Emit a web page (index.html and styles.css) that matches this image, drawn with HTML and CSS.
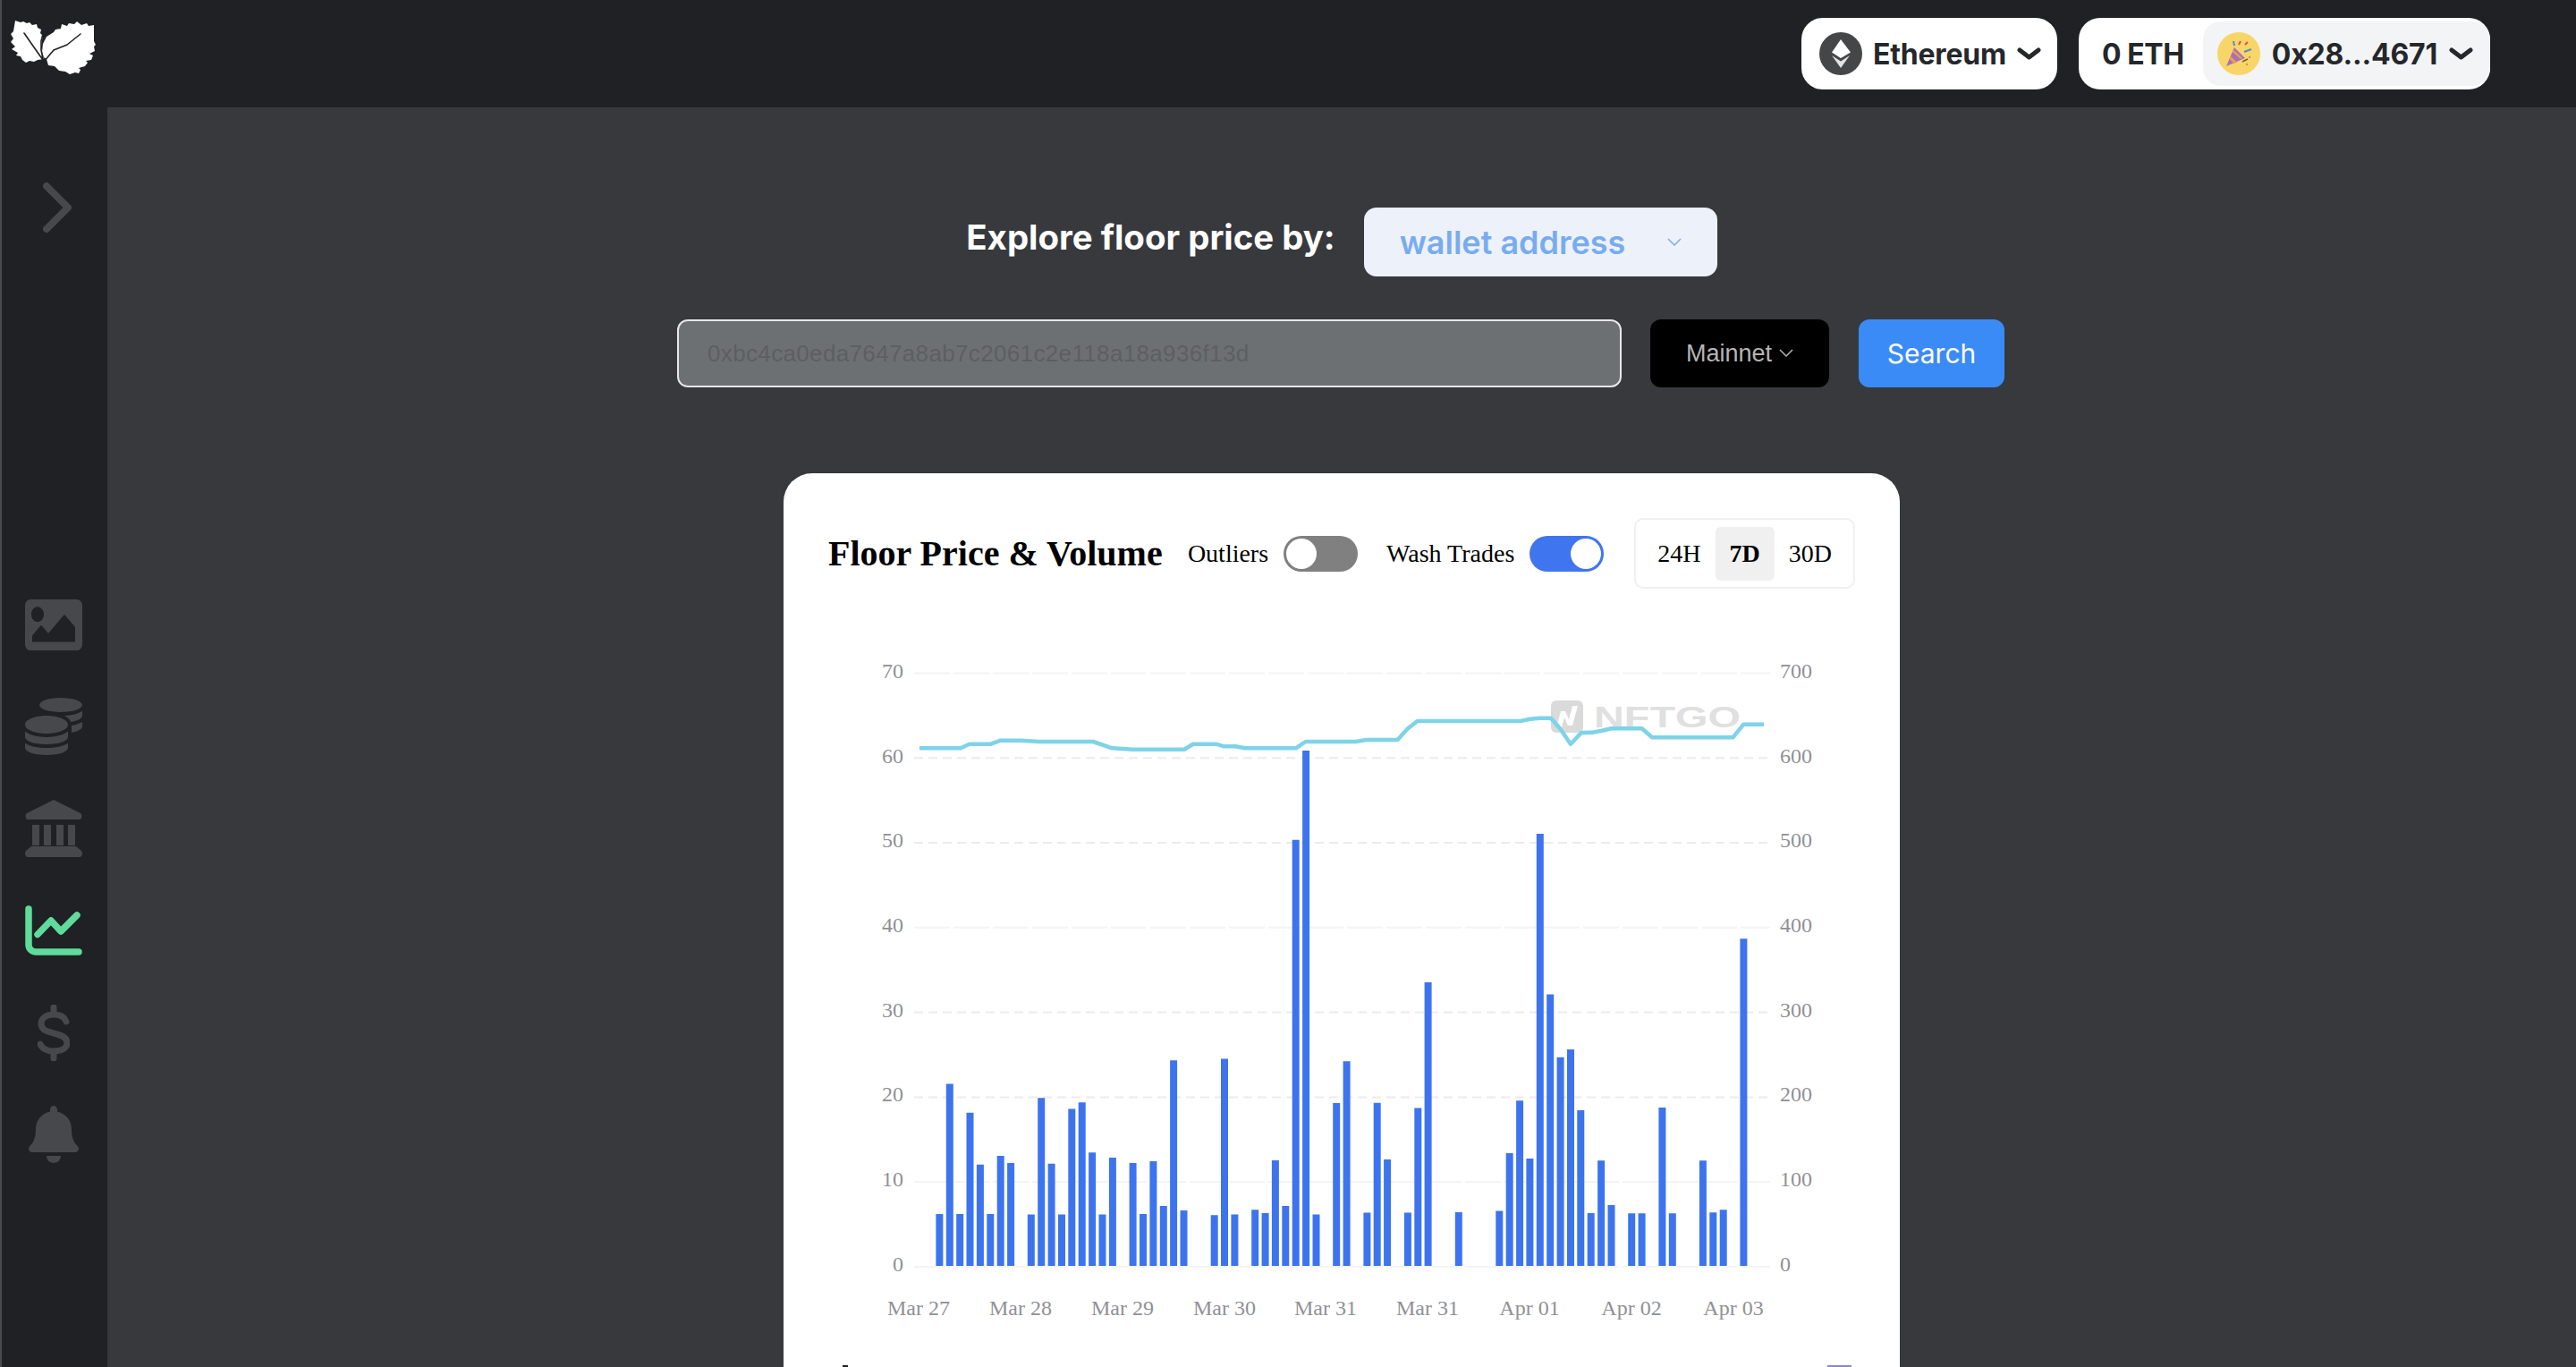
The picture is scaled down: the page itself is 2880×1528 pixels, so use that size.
FILE: index.html
```html
<!DOCTYPE html>
<html lang="en">
<head>
<meta charset="utf-8">
<title>Explore floor price</title>
<link rel="stylesheet" href="styles.css">
</head>
<body>
<div class="app">
  <header class="topbar">
    <svg class="logo" viewBox="0 0 120 100" aria-label="logo">
      <path class="leaf" d="M17 23l6 2 3-1 4 2 3-1 3 3 5-1 1 4 4 2-1 4 3 3-1 5-1 8 1 6 2 7-7 1-4 2-5-1-4 2-4-3-2-4-5-1 2-3-7-4 4-3-5-5 3-4-3-5 3-3z"/>
      <path class="leaf" d="M105 28l-6 1-2-3-6 2-5-4-3 3-6-1-2 3-6-2-1 5-6 1-2 3-8 5-4 8-1 9 2 6 3 2 2 7 7 1 5 5 7 1 5 3 6-2 4 1 2-4-2-2 7-2 3-4-2-2 6-1 2-5-4-2 6-3-1-5 2-2-2-4z"/>
      <path class="vein" d="M27 37l9 13 12 17M90 38L75 50 60 56 49 69M48 38l-2 8 0 10 2 10"/>
    </svg>
    <div class="pill">
      <svg class="coin" viewBox="0 0 48 48">
        <circle cx="24" cy="24" r="24" fill="#454648"/>
        <path fill="#fff" d="M24 8l11 14.500L24 29l-10-6.500z"/>
        <path fill="#e2e2e2" d="M14 26l10 6.500L34 26 24 40z"/>
      </svg>
      <span class="pill-name">Ethereum</span>
      <svg class="chev" viewBox="0 0 27 14"><path d="M3 3l10.500 8L24 3"/></svg>
    </div>
    <div class="pill wallet">
      <span class="balance">0 ETH</span>
      <div class="account">
        <svg class="coin" viewBox="0 0 48 48">
          <circle cx="24" cy="24" r="24" fill="#f8d568"/>
          <path fill="#a66fc4" d="M10 38l9-21 12 12z"/>
          <path fill="#f0a03c" d="M13.500 30l5.500 5 3-1.300-7-6.700zM17 22l9 8 2-1-10-9.500z"/>
          <path fill="none" stroke="#d9534f" stroke-width="2" d="M24 14l2-4M31 14l3-3"/>
          <path fill="none" stroke="#5b8bd0" stroke-width="2" d="M18 10l1 5M30 22l8-3"/>
          <path fill="none" stroke="#7a5a3a" stroke-width="1.500" d="M28 33l6-3"/>
          <circle cx="36" cy="28" r="1.200" fill="#c99a3e"/>
          <circle cx="33" cy="36" r="1.200" fill="#c99a3e"/>
        </svg>
        <span class="pill-name">0x28...4671</span>
        <svg class="chev" viewBox="0 0 27 14"><path d="M3 3l10.500 8L24 3"/></svg>
      </div>
    </div>
  </header>
  <div class="body">
    <aside class="sidebar">
      <svg class="expand" viewBox="0 0 32 56"><path d="M4 4l24 24L4 52"/></svg>
      <nav class="nav">
        <div class="nav-item"><svg class="ic-image" viewBox="0 64 512 384" preserveAspectRatio="none"><path d="M464 448H48c-26.510 0-48-21.490-48-48V112c0-26.510 21.490-48 48-48h416c26.510 0 48 21.490 48 48v288c0 26.510-21.490 48-48 48zM112 120c-30.928 0-56 25.072-56 56s25.072 56 56 56 56-25.072 56-56-25.072-56-56-56zM64 384h384V272l-87.515-87.515c-4.686-4.686-12.284-4.686-16.971 0L208 320l-55.515-55.515c-4.686-4.686-12.284-4.686-16.971 0L64 336v48z"/></svg></div>
        <div class="nav-item"><svg class="ic-sq" viewBox="0 0 512 512"><path d="M0 405.300V448c0 35.300 86 64 192 64s192-28.700 192-64v-42.700C342.700 434.400 267.200 448 192 448S41.300 434.400 0 405.300zM320 128c106 0 192-28.700 192-64S426 0 320 0 128 28.700 128 64s86 64 192 64zM0 300.400V352c0 35.300 86 64 192 64s192-28.700 192-64v-51.600c-41.300 34-116.900 51.600-192 51.600S41.300 334.400 0 300.400zm416 11c57.300-11.100 96-31.700 96-55.400v-42.700c-23.200 16.400-57.300 27.600-96 34.500v63.600zM192 160C86 160 0 195.800 0 240s86 80 192 80 192-35.800 192-80-86-80-192-80zm219.300 56.300c60-10.800 100.700-32 100.700-56.300v-42.700c-35.500 25.100-96.500 38.600-160.700 41.800 29.500 14.300 51.200 33.500 60 57.200z"/></svg></div>
        <div class="nav-item"><svg class="ic-sq" viewBox="0 0 64 64"><path d="M32 0l30 15c2 1 2 7-1 7H3c-3 0-3-6-1-7zM8 28h8v23H8zM21 28h8v23h-8zM35 28h8v23h-8zM48 28h8v23h-8zM7 52h50l6 5c2 2 1 7-2 7H3c-3 0-4-5-2-7z"/></svg></div>
        <div class="nav-item"><svg class="ic-chart" viewBox="0 0 64 56"><path d="M4 4v40a8 8 0 0 0 8 8h48M14 32.500L29 17l11 12 18-18"/></svg></div>
        <div class="nav-item"><svg class="ic-dollar" viewBox="0 0 36 63"><path d="M32 19c-2-6-8-8-14-8-8 0-14 4-14 10 0 8 8 9 14 11 8 2 15 4 15 11 0 6-7 9-15 9-7 0-13-3-15-8M18 3v8M18 52v8"/></svg></div>
        <div class="nav-item"><svg class="ic-bell" viewBox="0 0 448 512"><path d="M224 512c35.320 0 63.970-28.650 63.970-64H160.030c0 35.350 28.650 64 63.970 64zm215.390-149.710c-19.320-20.760-55.470-51.990-55.470-154.290 0-77.700-54.480-139.900-127.940-155.160V32c0-17.670-14.320-32-31.980-32s-31.980 14.330-31.980 32v20.840C118.560 68.100 64.080 130.300 64.080 208c0 102.300-36.150 133.530-55.470 154.290-6 6.450-8.660 14.160-8.610 21.710.110 16.400 12.980 32 32.100 32h383.800c19.120 0 32-15.600 32.100-32 .050-7.550-2.610-15.270-8.610-21.710z"/></svg></div>
      </nav>
    </aside>
    <main class="main">
      <div class="explore">
        <h1 class="explore-title">Explore floor price by:</h1>
        <div class="mode-select">
          <span>wallet address</span>
          <svg class="thin-chev" viewBox="0 0 16 10"><path d="M1 1l7 7 7-7"/></svg>
        </div>
      </div>
      <div class="search-row">
        <div class="address">0xbc4ca0eda7647a8ab7c2061c2e118a18a936f13d</div>
        <div class="network">
          <span>Mainnet</span>
          <svg class="thin-chev" viewBox="0 0 16 10"><path d="M1 1l7 7 7-7"/></svg>
        </div>
        <button class="search-btn">Search</button>
      </div>
      <section class="card">
        <div class="card-head">
          <h2 class="card-title">Floor Price &amp; Volume</h2>
          <div class="controls">
            <div class="switch-group">
              <span>Outliers</span>
              <span class="switch"><span class="knob"></span></span>
            </div>
            <div class="switch-group">
              <span>Wash Trades</span>
              <span class="switch on"><span class="knob"></span></span>
            </div>
            <div class="segment">
              <span class="seg">24H</span>
              <span class="seg active">7D</span>
              <span class="seg">30D</span>
            </div>
          </div>
        </div>
        <svg class="chart" viewBox="926 718 1147 800" width="1147" height="800">
          <g class="grid">
            <path class="faint" d="M1022 752.400H1979M1022 1036.800H1979M1022 1321H1979M1022 1416H1979"/>
            <path d="M1022 847.200H1979M1022 942H1979M1022 1131.600H1979M1022 1226.400H1979"/>
          </g>
          <g class="wm">
            <rect x="1734" y="783" width="36" height="36" rx="6" fill="#dadada"/>
            <path fill="#fff" d="M1740 813l5-18h5l4 9 4-15h6l-6 22h-5l-4-9-3 11z"/>
            <text class="wm-text" x="1782" y="813" textLength="164" lengthAdjust="spacingAndGlyphs">NFTGO</text>
          </g>
          <path class="bars" d="M1046.400 1356.900h8V1415h-8zM1057.800 1211.400h8V1415h-8zM1069.200 1356.900h8V1415h-8zM1080.500 1243.800h8V1415h-8zM1091.900 1301.700h8V1415h-8zM1103.300 1356.900h8V1415h-8zM1114.700 1291.900h8V1415h-8zM1126.100 1300h8V1415h-8zM1148.800 1357.600h8V1415h-8zM1160.200 1227.300h8V1415h-8zM1171.600 1300.700h8V1415h-8zM1183 1357.600h8V1415h-8zM1194.300 1239.400h8V1415h-8zM1205.700 1232.300h8V1415h-8zM1217.100 1288.200h8V1415h-8zM1228.500 1357.600h8V1415h-8zM1239.900 1293.900h8V1415h-8zM1262.600 1300h8V1415h-8zM1274 1356.900h8V1415h-8zM1285.400 1298h8V1415h-8zM1296.800 1348.100h8V1415h-8zM1308.100 1185.200h8V1415h-8zM1319.500 1352.900h8V1415h-8zM1353.700 1358.200h8V1415h-8zM1365 1183.500h8V1415h-8zM1376.400 1357.600h8V1415h-8zM1399.200 1352.200h8V1415h-8zM1410.600 1355.900h8V1415h-8zM1421.900 1297h8V1415h-8zM1433.300 1348.100h8V1415h-8zM1444.700 938.700h8V1415h-8zM1456.100 839h8V1415h-8zM1467.500 1357.600h8V1415h-8zM1490.200 1233h8V1415h-8zM1501.600 1186.200h8V1415h-8zM1524.400 1355.600h8V1415h-8zM1535.700 1232.700h8V1415h-8zM1547.100 1296h8V1415h-8zM1569.900 1355.600h8V1415h-8zM1581.300 1238.400h8V1415h-8zM1592.600 1098h8V1415h-8zM1626.800 1354.900h8V1415h-8zM1672.300 1353.500h8V1415h-8zM1683.700 1288.900h8V1415h-8zM1695.100 1230.300h8V1415h-8zM1706.400 1295h8V1415h-8zM1717.800 932h8V1415h-8zM1729.200 1111.400h8V1415h-8zM1740.600 1181.800h8V1415h-8zM1752 1173.100h8V1415h-8zM1763.300 1241h8V1415h-8zM1774.700 1355.900h8V1415h-8zM1786.100 1297.300h8V1415h-8zM1797.500 1347.100h8V1415h-8zM1820.200 1356.200h8V1415h-8zM1831.600 1356.200h8V1415h-8zM1854.400 1238h8V1415h-8zM1865.800 1356.200h8V1415h-8zM1899.900 1297.300h8V1415h-8zM1911.300 1355.200h8V1415h-8zM1922.700 1352.200h8V1415h-8zM1945.400 1049.200h8V1415h-8z"/>
          <polyline class="line" points="1027.900,836.300 1073.900,836.300 1083.900,831.700 1107.900,831.700 1118.600,827.700 1141.800,827.700 1161.400,829 1222.100,829 1243.600,836.300 1266.800,837.700 1323.900,837.700 1333.900,831.700 1359.600,831.700 1368.600,834.300 1381.100,834.300 1391.800,836.300 1448.900,836.300 1459.600,829 1516,829 1527.900,827 1562.500,827 1573.200,815 1584.600,806 1700,806 1710.700,803.700 1721.400,802.700 1733.900,802.700 1744.600,815 1756,831.700 1767.900,819 1780.400,818.700 1791,816.700 1801.800,814.300 1835.700,814.300 1847.100,824.300 1937.500,824.300 1949.300,809.700 1972.100,809.700"/>
          <g class="axis axis-left">
            <text x="1010" y="757.500">70</text>
            <text x="1010" y="852.500">60</text>
            <text x="1010" y="947">50</text>
            <text x="1010" y="1041.500">40</text>
            <text x="1010" y="1136.500">30</text>
            <text x="1010" y="1231">20</text>
            <text x="1010" y="1326">10</text>
            <text x="1010" y="1421">0</text>
          </g>
          <g class="axis axis-right">
            <text x="1990" y="757.500">700</text>
            <text x="1990" y="852.500">600</text>
            <text x="1990" y="947">500</text>
            <text x="1990" y="1041.500">400</text>
            <text x="1990" y="1136.500">300</text>
            <text x="1990" y="1231">200</text>
            <text x="1990" y="1326">100</text>
            <text x="1990" y="1421">0</text>
          </g>
          <g class="axis axis-bottom">
            <text x="1027" y="1470">Mar 27</text>
            <text x="1141" y="1470">Mar 28</text>
            <text x="1255" y="1470">Mar 29</text>
            <text x="1369" y="1470">Mar 30</text>
            <text x="1482" y="1470">Mar 31</text>
            <text x="1596" y="1470">Mar 31</text>
            <text x="1710" y="1470">Apr 01</text>
            <text x="1824" y="1470">Apr 02</text>
            <text x="1938" y="1470">Apr 03</text>
          </g>
        </svg>
        <div class="card-foot">
          <span class="foot-mark"></span>
          <span class="foot-swatch"></span>
        </div>
      </section>
    </main>
  </div>
</div>
</body>
</html>
```

FILE: styles.css
```css
* { box-sizing: border-box; }
html, body { margin: 0; height: 100%; overflow: hidden; }
body { font-family: Inter, "Liberation Sans", sans-serif; background: #1f2124; }

.app { height: 100vh; display: flex; flex-direction: column; border-left: 2px solid #4b4c4f; overflow: hidden; }

.topbar { flex: 0 0 120px; height: 120px; display: flex; align-items: center; justify-content: flex-end; gap: 24px; padding-right: 96px; background: #1f2124; position: relative; }
.logo { width: 120px; height: 100px; margin-right: auto; margin-left: -2px; align-self: flex-start; }
.leaf { fill: #fff; }
.vein { fill: none; stroke: #1f2124; stroke-width: 1.6; stroke-linecap: round; stroke-linejoin: round; }

.pill { height: 80px; display: flex; align-items: center; gap: 12px; padding: 0 18px 0 20px; background: #fff; border-radius: 24px; font-size: 32px; font-weight: 700; color: #25272b; }
.pill-name { letter-spacing: -0.2px; }
.coin { width: 48px; height: 48px; flex: none; }
.chev { width: 27px; height: 14px; fill: none; stroke: #25272b; stroke-width: 5; stroke-linecap: round; stroke-linejoin: round; flex: none; }
.wallet { padding: 0 0 0 26px; gap: 21px; }
.balance { letter-spacing: -0.4px; }
.account { height: 72px; display: flex; align-items: center; gap: 13px; padding: 0 19px 0 16px; background: #f3f4f6; border-radius: 20px; }

.body { flex: 1; display: flex; min-height: 0; }
.sidebar { flex: 0 0 118px; display: flex; flex-direction: column; align-items: center; padding-right: 2px; background: #1f2124; }
.expand { width: 32px; height: 56px; margin: 84px 0 0 8px; fill: none; stroke: #46484c; stroke-width: 8; stroke-linecap: round; stroke-linejoin: round; flex: none; }
.nav { margin-top: 381px; display: flex; flex-direction: column; }
.nav-item { height: 114px; display: flex; align-items: center; justify-content: center; }
.nav-item svg { fill: #46484c; display: block; }
.ic-image { width: 64px; height: 57px; }
.ic-sq { width: 64px; height: 64px; }
.nav-item .ic-chart { width: 64px; height: 56px; fill: none; stroke: #5fdb9b; stroke-width: 7.5; stroke-linecap: round; stroke-linejoin: round; }
.nav-item .ic-dollar { width: 36px; height: 63px; fill: none; stroke: #46484c; stroke-width: 7; stroke-linecap: round; }
.ic-bell { width: 56px; height: 64px; }

.main { flex: 1; min-width: 0; display: flex; flex-direction: column; align-items: center; padding-top: 112px; background: #37393d; overflow: hidden; }

.explore { flex: none; display: flex; align-items: center; gap: 32px; }
.explore-title { margin: 0 0 12px; font-size: 38.4px; font-weight: 700; color: #fff; }
.mode-select { width: 395px; height: 77px; display: flex; align-items: center; justify-content: space-between; padding: 0 40px; background: #edf1fa; border-radius: 14px; font-size: 36px; font-weight: 600; color: #77acf1; }
.thin-chev { width: 16px; height: 10px; fill: none; stroke: currentColor; stroke-width: 1.5; flex: none; }

.search-row { flex: none; display: flex; align-items: stretch; margin: 48px 0 0 -2px; height: 76px; }
.address { width: 1056px; display: flex; align-items: center; padding: 0 32px; background: #6d7072; border: 2px solid #e5e7eb; border-radius: 12px; font-family: "Liberation Sans", sans-serif; font-size: 26px; letter-spacing: 0.35px; color: #5c5f61; }
.network { width: 200px; margin-left: 32px; display: flex; align-items: center; justify-content: center; gap: 8px; background: #000; border-radius: 12px; font-family: "Liberation Sans", sans-serif; font-size: 27px; color: #b5b5b5; }
.search-btn { width: 163px; margin-left: 33px; border: 0; background: #3b8bf6; border-radius: 12px; color: #fff; font: 400 30px Inter, sans-serif; }

.card { width: 1248px; margin-top: 96px; padding: 50px 50px 0; background: #fff; border-radius: 32px; flex: none; font-family: "Liberation Serif", serif; color: #000; }
.card-head { display: flex; align-items: center; height: 79px; }
.card-title { margin: 0; font-size: 40px; font-weight: 700; white-space: nowrap; }
.controls { margin-left: auto; display: flex; align-items: center; gap: 32px; font-size: 28px; }
.switch-group { display: flex; align-items: center; gap: 17px; }
.switch { width: 83px; height: 40px; padding: 3px; display: flex; border-radius: 20px; background: #808080; }
.switch.on { background: #3f75ee; justify-content: flex-end; }
.knob { width: 34px; height: 34px; border-radius: 50%; background: #fff; }
.segment { display: flex; align-items: center; height: 79px; margin-left: 2px; padding: 0 8px; border: 2px solid #f0f0f0; border-radius: 10px; }
.seg { height: 60px; padding: 0 16px; display: flex; align-items: center; border-radius: 6px; }
.seg.active { background: #f0f0f0; font-weight: 700; }

.chart { display: block; margin-top: 60px; }
.grid path { fill: none; stroke: #ececec; stroke-width: 2; stroke-dasharray: 10 6; }
.grid .faint { stroke: #f4f4f4; stroke-dasharray: 40 4; }
.bars { fill: #3d74ee; }
.line { fill: none; stroke: #7ed3e8; stroke-width: 4.5; stroke-linejoin: round; }
.axis text { font-family: "Liberation Serif", serif; font-size: 24px; fill: #8f9196; }
.axis-left text { text-anchor: end; }
.axis-bottom text { text-anchor: middle; }
.wm-text { font-family: "Liberation Sans", sans-serif; font-size: 33px; font-weight: 700; fill: #e0e0e0; }

.card-foot { display: flex; justify-content: space-between; margin-top: 8px; padding: 0 4px 0 16px; height: 40px; }
.foot-mark { width: 6px; height: 16px; background: #222; }
.foot-swatch { width: 27px; height: 16px; background: #8d86c4; }
```
